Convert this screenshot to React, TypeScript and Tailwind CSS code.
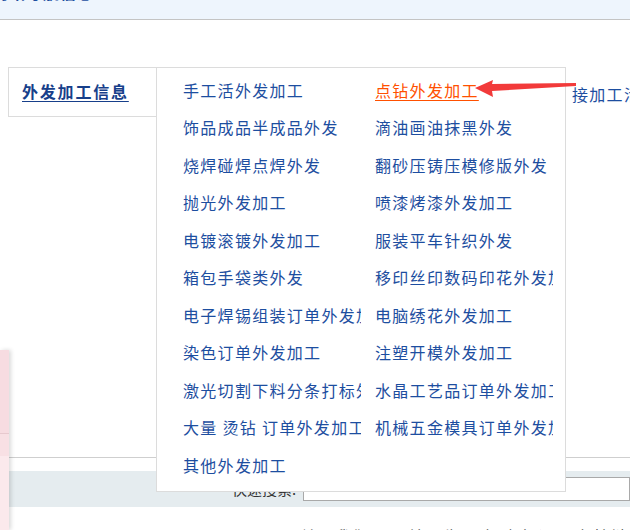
import React from "react";

const left = [
  "手工活外发加工",
  "饰品成品半成品外发",
  "烧焊碰焊点焊外发",
  "抛光外发加工",
  "电镀滚镀外发加工",
  "箱包手袋类外发",
  "电子焊锡组装订单外发加工",
  "染色订单外发加工",
  "激光切割下料分条打标外发",
  "大量 烫钻 订单外发加工",
  "其他外发加工",
];
const right = [
  "点钻外发加工",
  "滴油画油抹黑外发",
  "翻砂压铸压模修版外发",
  "喷漆烤漆外发加工",
  "服装平车针织外发",
  "移印丝印数码印花外发加工",
  "电脑绣花外发加工",
  "注塑开模外发加工",
  "水晶工艺品订单外发加工",
  "机械五金模具订单外发加工",
  "",
];

export default function App() {
  const rows = left.map((l, i) => [l, right[i]]);
  return (
    <div
      className="relative w-[630px] h-[530px] overflow-hidden bg-white"
      style={{ fontFamily: '"Noto Sans CJK SC", "Liberation Sans", sans-serif' }}
    >
      {/* top bar */}
      <div className="h-[20px] bg-[#eef5fd] border-b border-[#c4c4c4] overflow-hidden">
        <div className="-mt-[17px] -ml-[8px] text-[16px] leading-[18px] font-bold text-[#1d4ea0] tracking-[1px] whitespace-nowrap">
          网站导航信息
        </div>
      </div>

      {/* nav row */}
      <div className="mt-[47px] flex items-start">
        <div className="relative shrink-0 ml-[8px] w-[149px] h-[50px] border-t border-l border-b border-[#dcdcdc] bg-white z-20">
          <div className="pl-[13px] pt-[11px] text-[16px] leading-[24px] font-bold text-[#173f8a] underline underline-offset-[3px] tracking-[1.8px] whitespace-nowrap">
            外发加工信息
          </div>
          {/* dropdown */}
          <div className="absolute left-[147px] -top-px w-[410px] h-[425px] border border-[#dcdcdc] bg-white pl-[26px] pt-[3px]">
            <div className="grid grid-cols-[178px_178px] gap-x-[14px]">
              {rows.map(([a, b], i) => (
                <React.Fragment key={i}>
                  <div className="h-[37.5px] flex items-center overflow-hidden whitespace-nowrap text-[16px] tracking-[1.3px] text-[#1d4ea0]">
                    {a}
                  </div>
                  <div
                    className={
                      i === 0
                        ? "h-[37.5px] flex items-center overflow-hidden whitespace-nowrap text-[16px] tracking-[1.3px] text-[#ff5000] underline underline-offset-[3px]"
                        : "h-[37.5px] flex items-center overflow-hidden whitespace-nowrap text-[16px] tracking-[1.3px] text-[#1d4ea0]"
                    }
                  >
                    {b}
                  </div>
                </React.Fragment>
              ))}
            </div>
          </div>
        </div>
        <div className="shrink-0 ml-[415px] mt-[15px] text-[16px] leading-[24px] tracking-[1.3px] text-[#1d4ea0] whitespace-nowrap">
          接加工活
        </div>
      </div>

      {/* arrow */}
      <svg className="absolute left-[470px] top-[74px] z-30" width="110" height="28" viewBox="0 0 110 28">
        <polygon
          points="5,14 23,6 22,10 106,9 106,12 22,17 23,23"
          fill="#f23a3a"
        />
      </svg>

      {/* line */}
      <div className="mt-[340px] ml-[8px] border-t border-[#cfcfcf]"></div>

      {/* search band */}
      <div className="mt-[13px] ml-[8px] h-[36px] bg-[#e5ecef] flex items-center">
        <div className="ml-[224px] text-[15px] text-[#333] whitespace-nowrap">快速搜索:</div>
        <div className="ml-[7px] h-[24px] flex-1 border border-[#a9a9a9] bg-white"></div>
      </div>

      {/* footer links */}
      <div className="mt-[17px] flex text-[16px] text-[#444] tracking-[1.3px] whitespace-nowrap">
        <span className="ml-[300px]">关于我们</span>
        <span className="ml-[22px]">网站公告</span>
        <span className="ml-[22px]">帮助中心</span>
        <span className="ml-[25px]">友情链接</span>
      </div>

      {/* left pink floating panel */}
      <div className="absolute left-0 top-[350px] w-[9px] h-[180px] bg-[#fbe9ec] shadow-[2px_0_4px_rgba(0,0,0,0.15)] flex flex-col z-10">
        <div className="h-[84px] bg-[#f7dce1] border-b border-[#e7c9ce]"></div>
        <div className="h-[22px] bg-[#f8e0e4]"></div>
      </div>
    </div>
  );
}
